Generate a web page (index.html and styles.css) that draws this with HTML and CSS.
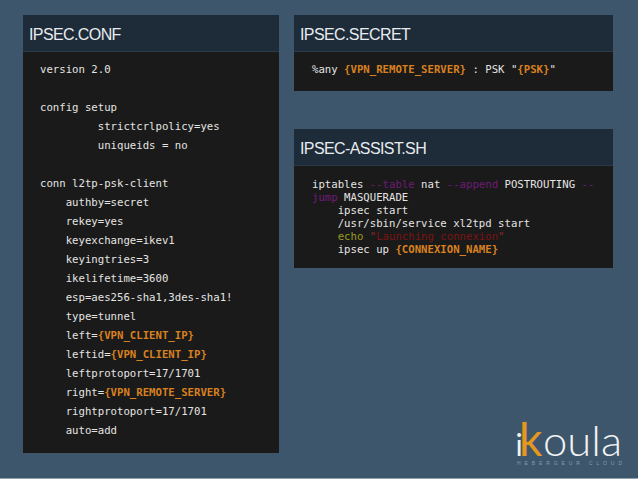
FILE: index.html
```html
<!DOCTYPE html>
<html lang="fr">
<head>
<meta charset="utf-8">
<title>IPSEC</title>
<link rel="stylesheet" href="styles.css">
</head>
<body>
<main class="slide">
  <section class="panel panel-conf">
    <h2 class="panel-title">IPSEC.CONF</h2>
    <div class="code code-conf">
      <div class="line">version 2.0</div>
      <div class="line"></div>
      <div class="line">config setup</div>
      <div class="line indent-9">strictcrlpolicy=yes</div>
      <div class="line indent-9">uniqueids = no</div>
      <div class="line"></div>
      <div class="line">conn l2tp-psk-client</div>
      <div class="line indent-4">authby=secret</div>
      <div class="line indent-4">rekey=yes</div>
      <div class="line indent-4">keyexchange=ikev1</div>
      <div class="line indent-4">keyingtries=3</div>
      <div class="line indent-4">ikelifetime=3600</div>
      <div class="line indent-4">esp=aes256-sha1,3des-sha1!</div>
      <div class="line indent-4">type=tunnel</div>
      <div class="line indent-4"><span>left=</span><b class="var">{VPN_CLIENT_IP}</b></div>
      <div class="line indent-4"><span>leftid=</span><b class="var">{VPN_CLIENT_IP}</b></div>
      <div class="line indent-4">leftprotoport=17/1701</div>
      <div class="line indent-4"><span>right=</span><b class="var">{VPN_REMOTE_SERVER}</b></div>
      <div class="line indent-4">rightprotoport=17/1701</div>
      <div class="line indent-4">auto=add</div>
    </div>
  </section>
  <div class="side">
    <section class="panel panel-secret">
      <h2 class="panel-title">IPSEC.SECRET</h2>
      <div class="code code-side code-secret">
        <div class="line"><span>%any </span><b class="var">{VPN_REMOTE_SERVER}</b><span> : PSK "</span><b class="var">{PSK}</b><span>"</span></div>
      </div>
    </section>
    <section class="panel panel-assist">
      <h2 class="panel-title">IPSEC-ASSIST.SH</h2>
      <div class="code code-side">
        <div class="line"><span>iptables </span><span class="flag">--table</span><span> nat </span><span class="flag">--append</span><span> POSTROUTING </span><span class="flag">--</span></div>
        <div class="line"><span class="flag">jump</span><span> MASQUERADE</span></div>
        <div class="line indent-4">ipsec start</div>
        <div class="line indent-4">/usr/sbin/service xl2tpd start</div>
        <div class="line indent-4"><span class="cmd">echo</span><span> </span><span class="str">"</span><span class="str-in">Launching connexion</span><span class="str">"</span></div>
        <div class="line indent-4"><span>ipsec up </span><b class="var">{CONNEXION_NAME}</b></div>
      </div>
    </section>
    <svg class="logo" viewBox="0 0 115 55" width="115" height="55" role="img" aria-label="iKoula Hébergeur Cloud">
      <text class="logo-i" x="3.5" y="41">i</text>
      <text class="logo-k" x="7" y="41">k</text>
      <text class="logo-oula" x="31" y="41" textLength="79" lengthAdjust="spacingAndGlyphs">oula</text>
      <text class="logo-sub" x="5" y="50" textLength="105">HEBERGEUR CLOUD</text>
    </svg>
  </div>
</main>
</body>
</html>
```
FILE: styles.css
```css
html, body {
  margin: 0;
  padding: 0;
}
body {
  width: 638px;
  height: 479px;
  overflow: hidden;
  background: #3d566c;
}
.slide {
  box-sizing: border-box;
  width: 638px;
  height: 479px;
  padding: 15px 25px 0 23px;
  display: flex;
  gap: 15px;
  align-items: flex-start;
  border-bottom: 1px solid #8fa3ad;
}
.panel {
  background: #1a1a1a;
}
.panel-conf {
  width: 256px;
  height: 438px;
}
.side {
  width: 319px;
  display: flex;
  flex-direction: column;
}
.panel-secret {
  height: 76px;
}
.panel-assist {
  margin-top: 38px;
  height: 139px;
}
.panel-title {
  margin: 0;
  height: 37px;
  box-sizing: border-box;
  padding: 11px 0 0 6px;
  background: #1e2b38;
  border-bottom: 1px solid #2a3a48;
  color: #e8ecef;
  font: 400 16px/18px "Liberation Sans", Arial, sans-serif;
  letter-spacing: -0.6px;
}
.code {
  color: #e4e4e2;
  font: 400 10.66px "DejaVu Sans Mono", monospace;
}
.line {
  white-space: pre;
}
.code-conf {
  padding: 8px 0 0 17px;
}
.code-conf .line {
  height: 19px;
  line-height: 19px;
}
.code-side {
  padding: 12px 0 0 18px;
}
.code-side .line {
  height: 13px;
  line-height: 13px;
}
.code-secret {
  padding-top: 11px;
}
.indent-4 {
  padding-left: 4ch;
}
.indent-9 {
  padding-left: 9ch;
}
.var {
  color: #d9811f;
  font-weight: 700;
}
.flag {
  color: #6f1a78;
}
.cmd {
  color: #9a9a1e;
}
.str {
  color: #8e2a2a;
}
.str-in {
  color: #7c1414;
}
.logo {
  align-self: flex-end;
  margin: 147px -14px 0 0;
  overflow: visible;
}
.logo-i {
  fill: #f2f2f2;
  font: 400 30px Lato, sans-serif;
}
.logo-k {
  fill: #e5981f;
  font: 400 46px Lato, sans-serif;
}
.logo-oula {
  fill: #f2f2f2;
  font: 300 41px Lato, sans-serif;
}
.logo-sub {
  fill: #8b9ca9;
  font: 400 5px "Liberation Sans", sans-serif;
}
```
